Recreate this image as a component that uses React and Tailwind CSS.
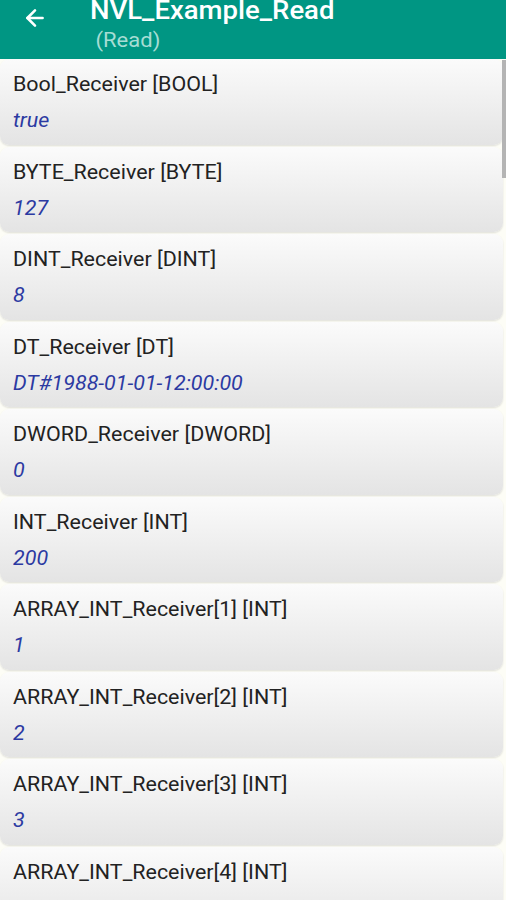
import { ArrowLeft } from 'lucide-react';

const ITEMS = [
  { label: 'Bool_Receiver [BOOL]', value: 'true' },
  { label: 'BYTE_Receiver [BYTE]', value: '127' },
  { label: 'DINT_Receiver [DINT]', value: '8' },
  { label: 'DT_Receiver [DT]', value: 'DT#1988-01-01-12:00:00' },
  { label: 'DWORD_Receiver [DWORD]', value: '0' },
  { label: 'INT_Receiver [INT]', value: '200' },
  { label: 'ARRAY_INT_Receiver[1] [INT]', value: '1' },
  { label: 'ARRAY_INT_Receiver[2] [INT]', value: '2' },
  { label: 'ARRAY_INT_Receiver[3] [INT]', value: '3' },
  { label: 'ARRAY_INT_Receiver[4] [INT]', value: '4' },
];

// the screenshot is slightly stretched sideways, so text gets a small x-scale
function Card({ label, value }) {
  return (
    <div className="h-[87.5px] pb-[2px]">
      <div className="h-full rounded-[9px] bg-gradient-to-b from-[#fbfbfb] to-[#e4e4e4] shadow-[0_1px_2px_rgba(0,0,0,0.12)] px-[13px] pt-[13px]">
        <div className="text-[19.5px] leading-[26px] text-[#222] origin-left scale-x-[1.1] whitespace-nowrap">{label}</div>
        <div className="mt-[10px] text-[19.5px] leading-[26px] italic text-[#2c3aa2] origin-left scale-x-[1.1] whitespace-nowrap">{value}</div>
      </div>
    </div>
  );
}

export default function App() {
  return (
    <div className="relative w-[506px] h-[900px] overflow-hidden bg-[#fdfdf6] font-['Roboto',sans-serif]">
      <header className="h-[59px] bg-[#009683] flex items-start">
        <div className="w-[90px] pl-[22px] pt-[5px] text-white">
          <ArrowLeft size={26} strokeWidth={2.4} />
        </div>
        <div className="flex flex-col -mt-[5px]">
          <div className="text-[25px] leading-[31px] font-medium text-white origin-left scale-x-[1.1] whitespace-nowrap">NVL_Example_Read</div>
          <div className="pl-[5px] pt-[3px] text-[20px] leading-[22px] text-[#a6ddd4] origin-left scale-x-[1.1]">(Read)</div>
        </div>
      </header>

      <div className="pr-[3px]">
        {ITEMS.map((it) => (
          <Card key={it.label} {...it} />
        ))}
      </div>

      <div className="absolute right-0 top-[60px] w-[4px] h-[118px] bg-[#b4b4b4]" />
    </div>
  );
}
